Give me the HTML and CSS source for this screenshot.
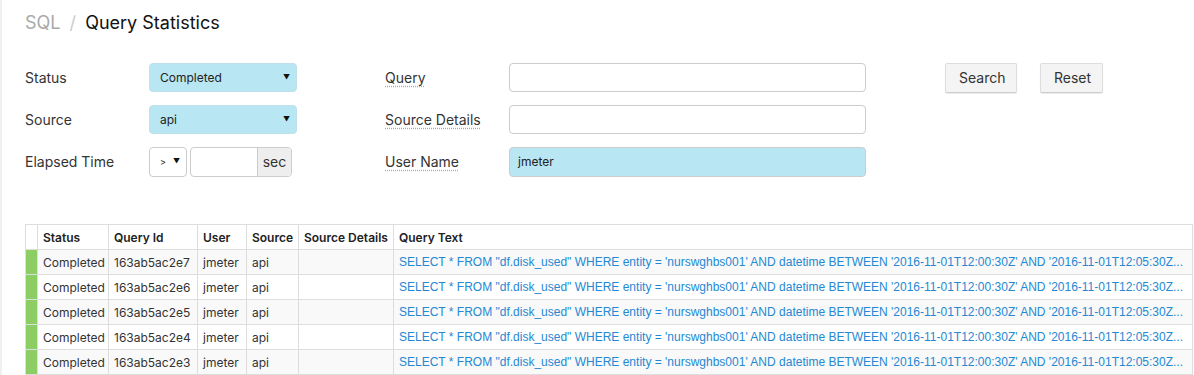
FILE: index.html
```html
<!DOCTYPE html>
<html>
<head>
    <title>Query Statistics</title>
    <meta charset="utf-8">
    <link rel="stylesheet" href="styles.css">
</head>
<body>
    <div class="page">
        <h1 class="crumbs">
            <span class="crumb-parent">SQL</span>
            <span class="crumb-sep">/</span>
            <span class="crumb-current">Query Statistics</span>
        </h1>

        <form class="filters">
            <label class="filter-label">Status</label>
            <div class="select filled">Completed<span class="caret">▼</span></div>
            <div></div>
            <label class="filter-label dotted"><span>Query</span></label>
            <div class="text-input"></div>
            <div class="actions">
                <button type="button">Search</button>
                <button type="button">Reset</button>
            </div>

            <label class="filter-label">Source</label>
            <div class="select filled">api<span class="caret">▼</span></div>
            <div></div>
            <label class="filter-label dotted"><span>Source Details</span></label>
            <div class="text-input"></div>
            <div></div>

            <label class="filter-label">Elapsed Time</label>
            <div class="elapsed">
                <div class="select op"><span class="op-value">&gt;</span><span class="caret">▼</span></div>
                <div class="input-group">
                    <div class="group-field"></div>
                    <div class="addon">sec</div>
                </div>
            </div>
            <div></div>
            <label class="filter-label dotted"><span>User Name</span></label>
            <div class="text-input filled">jmeter</div>
            <div></div>
        </form>

        <table class="queries">
            <colgroup>
                <col style="width: 12px">
                <col style="width: 71px">
                <col style="width: 89px">
                <col style="width: 49px">
                <col style="width: 52px">
                <col style="width: 95px">
                <col>
            </colgroup>
            <thead>
                <tr>
                    <th></th>
                    <th>Status</th>
                    <th>Query Id</th>
                    <th>User</th>
                    <th>Source</th>
                    <th>Source Details</th>
                    <th>Query Text</th>
                </tr>
            </thead>
            <tbody id="rows"></tbody>
        </table>
    </div>

    <script>
        const ids = ['163ab5ac2e7', '163ab5ac2e6', '163ab5ac2e5', '163ab5ac2e4', '163ab5ac2e3'];
        // the list view shows a shortened query text
        const sql = 'SELECT * FROM "df.disk_used" WHERE entity = \'nurswghbs001\' AND datetime BETWEEN \'2016-11-01T12:00:30Z\' AND \'2016-11-01T12:05:30Z...';
        const tbody = document.getElementById('rows');

        ids.forEach((id) => {
            const tr = document.createElement('tr');
            tr.innerHTML =
                '<td class="state done"></td>' +
                '<td>Completed</td>' +
                '<td>' + id + '</td>' +
                '<td>jmeter</td>' +
                '<td>api</td>' +
                '<td></td>' +
                '<td class="sql"></td>';
            tr.querySelector('.sql').textContent = sql;
            tbody.appendChild(tr);
        });
    </script>
</body>
</html>
```

FILE: styles.css
```css
body {
    margin: 0;
    padding: 0;
    background: white;
    font-family: Inter, "Noto Sans", sans-serif;
    color: #333;
}

.page {
    min-height: 375px;
    padding: 0 1px 0 23px;
    border-left: 2px solid #f0f0f0;
}

.crumbs {
    margin: 0;
    padding-top: 9px;
    height: 28px;
    line-height: 28px;
    font-size: 18px;
    font-weight: normal;
}

.crumb-parent {
    color: #aaa;
}

.crumb-sep {
    color: #ccc;
    margin: 0 4px 0 4px;
}

.crumb-current {
    color: #111;
}

.filters {
    display: grid;
    grid-template-columns: 124px 148px 88px 124px 357px 1fr;
    grid-auto-rows: 29px;
    row-gap: 13px;
    margin-top: 26px;
    align-items: center;
}

.filter-label {
    font-size: 14px;
    color: #333;
}

.filter-label.dotted span {
    text-decoration: underline dotted #aaa;
    text-underline-offset: 3px;
}

.select {
    height: 29px;
    box-sizing: border-box;
    border: 1px solid #ccc;
    border-radius: 4px;
    display: flex;
    align-items: center;
    justify-content: space-between;
    padding: 0 6px 0 10px;
    font-size: 12px;
    color: #222;
}

.select.filled {
    background: #b9e6f3;
    border-color: #bde0ea;
}

.caret {
    font-size: 7px;
    color: #111;
}

.elapsed {
    display: flex;
    gap: 3px;
    height: 30px;
}

.select.op {
    width: 38px;
    height: 30px;
    padding: 0 6px 0 10px;
    background: white;
}

.op-value {
    font-size: 9px;
}

.input-group {
    display: flex;
    width: 102px;
    border: 1px solid #ccc;
    border-radius: 4px;
    box-sizing: border-box;
    overflow: hidden;
}

.group-field {
    flex: 1;
}

.addon {
    width: 33px;
    background: #eee;
    border-left: 1px solid #ccc;
    display: flex;
    align-items: center;
    justify-content: center;
    font-size: 14px;
    color: #333;
}

.text-input {
    height: 29px;
    box-sizing: border-box;
    border: 1px solid #ccc;
    border-radius: 4px;
    background: white;
    display: flex;
    align-items: center;
    padding: 0 8px;
    font-size: 12px;
    color: #222;
}

.text-input.filled {
    background: #b9e6f3;
    height: 30px;
}

.actions {
    display: flex;
    gap: 23px;
    padding-left: 79px;
}

.actions button {
    height: 30px;
    padding: 0 13px;
    background: #f4f4f4;
    border: 1px solid #ddd;
    border-bottom-color: #ccc;
    border-radius: 2px;
    font-family: inherit;
    font-size: 14px;
    color: #333;
    box-shadow: 0 1px 1px rgba(0, 0, 0, 0.08);
}

.actions button:first-child {
    width: 72px;
}

.actions button:last-child {
    width: 63px;
}

.queries {
    margin-top: 48px;
    width: 100%;
    table-layout: fixed;
    border-collapse: collapse;
    border: 1px solid #ddd;
    font-size: 12px;
}

.queries th,
.queries td {
    height: 24px;
    padding: 0 5px;
    border: 1px solid #ddd;
    text-align: left;
    white-space: nowrap;
    overflow: hidden;
}

.queries th {
    font-weight: 600;
    color: #222;
}

.queries tbody tr:nth-child(odd) {
    background: #f9f9f9;
}

.queries td {
    color: #333;
}

.queries td.state {
    padding: 0;
}

.queries td.done {
    background: #8ccd64;
}

.queries td.sql {
    font-family: "Liberation Sans", Arial, sans-serif;
    color: #2488d3;
    text-overflow: ellipsis;
}
```
